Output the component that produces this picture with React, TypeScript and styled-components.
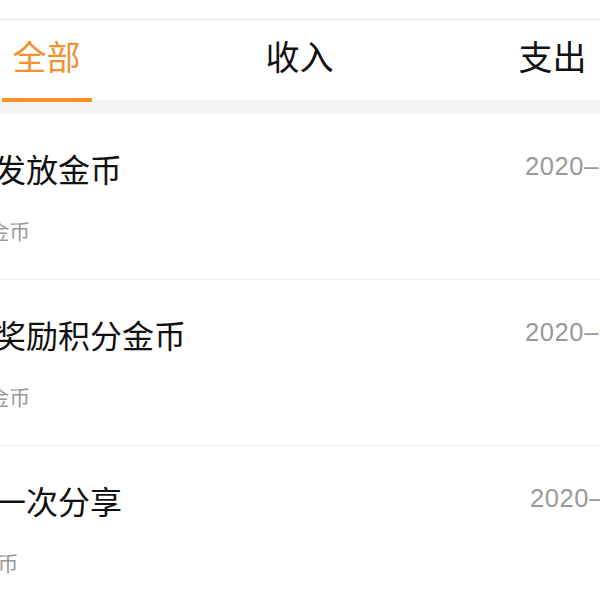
import React, { useState } from "react";
import styled, { createGlobalStyle } from "styled-components";

const tabs = ["全部", "收入", "支出"];

const records = [
  { title: "系统发放金币", amount: "+1000金币", date: "2020–06-18 10:23:45", shift: 0 },
  { title: "签到奖励积分金币", amount: "+1000金币", date: "2020–06-17 09:12:08", shift: 0 },
  { title: "完成一次分享", amount: "+500金币", date: "2020–06-16 18:40:11", shift: 5 },
];

const GlobalStyle = createGlobalStyle`
  html, body {
    margin: 0;
    padding: 0;
    background: #ffffff;
    overflow: hidden;
  }
  body {
    font-family: "Noto Sans CJK SC", "Noto Sans", sans-serif;
  }
`;

export default function App() {
  const [active, setActive] = useState(0);

  return (
    <PageStyled>
      <GlobalStyle />
      <TopBarStyled />
      <TabsStyled>
        {tabs.map((tab, i) => (
          <TabStyled key={tab} $active={i === active} onClick={() => setActive(i)}>
            {tab}
            {i === active && <IndicatorStyled />}
          </TabStyled>
        ))}
      </TabsStyled>
      <GapStyled />
      <ListStyled>
        {records.map((r) => (
          <RowStyled key={r.title}>
            <MainStyled>
              <TitleStyled>{r.title}</TitleStyled>
              <AmountStyled>{r.amount}</AmountStyled>
            </MainStyled>
            <DateStyled $shift={r.shift}>{r.date}</DateStyled>
          </RowStyled>
        ))}
      </ListStyled>
    </PageStyled>
  );
}

const PageStyled = styled.div`
  width: 600px;
  height: 600px;
  overflow: hidden;
  background: #ffffff;
`;

const TopBarStyled = styled.div`
  height: 19px;
  border-bottom: 1px solid #e6e6e6;
`;

const TabsStyled = styled.div`
  display: grid;
  grid-template-columns: repeat(3, 253px);
  margin-left: -80px;
  height: 80px;
`;

const TabStyled = styled.div<{ $active: boolean }>`
  position: relative;
  display: flex;
  align-items: center;
  justify-content: center;
  padding-bottom: 10px;
  font-size: 34px;
  color: ${(p) => (p.$active ? "#f0922f" : "#111111")};
  cursor: pointer;
  z-index: 1;
`;

const IndicatorStyled = styled.span`
  position: absolute;
  left: 50%;
  bottom: -2px;
  width: 90px;
  height: 4px;
  margin-left: -45px;
  background: #f5922a;
`;

const GapStyled = styled.div`
  height: 14px;
  background: #f5f5f5;
`;

const ListStyled = styled.div`
  margin-left: -70px;
`;

const RowStyled = styled.div`
  display: grid;
  grid-template-columns: 595px auto;
  height: 165px;
  border-bottom: 1px solid #eeeeee;
`;

const MainStyled = styled.div`
  display: flex;
  flex-direction: column;
  padding-top: 34px;
`;

const TitleStyled = styled.div`
  font-size: 32px;
  line-height: 40px;
  color: #111111;
  white-space: nowrap;
`;

const AmountStyled = styled.div`
  margin-top: 28px;
  font-size: 21px;
  line-height: 28px;
  color: #999999;
  white-space: nowrap;
`;

const DateStyled = styled.div<{ $shift: number }>`
  padding-top: 38px;
  padding-left: ${(p) => p.$shift}px;
  font-family: "Liberation Sans", Arial, sans-serif;
  font-size: 25.5px;
  letter-spacing: 0.6px;
  line-height: 28px;
  color: #999999;
  white-space: nowrap;
`;
